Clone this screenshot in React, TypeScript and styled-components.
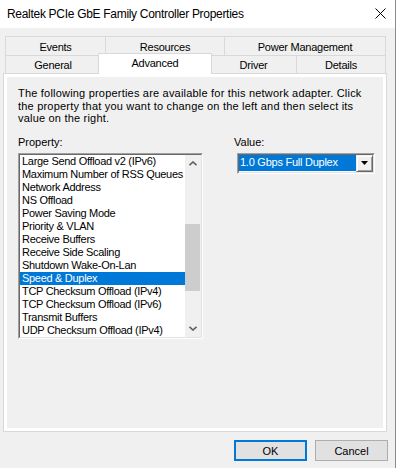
import React from 'react';
import styled, {createGlobalStyle} from 'styled-components';

const GlobalStyle = createGlobalStyle`
  html, body {
    margin: 0;
    padding: 0;
    background: #f0f0f0;
  }
  body {
    font-family: "Liberation Sans", Arial, sans-serif;
    font-size: 11px;
    color: #000;
  }
`

const Window = styled.div`
  width: 396px;
  height: 468px;
  box-sizing: border-box;
  border-right: 1px solid #8c8c8c;
  display: flex;
  flex-direction: column;
  background: #f0f0f0;
`

const TitleBar = styled.div`
  height: 27px;
  flex-shrink: 0;
  background: #fff;
  display: flex;
  align-items: center;
  justify-content: space-between;
  padding: 0 9px 1px 7px;
  font-size: 12px;
  letter-spacing: -0.3px;
`

const Body = styled.div`
  padding: 8px 8px 0 3px;
  display: flex;
  flex-direction: column;
`

const TabStrip = styled.div`
  padding-left: 2px;
  display: flex;
  flex-direction: column;
`

const TabRow = styled.div<{ $height: number }>`
  display: flex;
  align-items: flex-start;
  height: ${p => p.$height}px;
`

const Tab = styled.div<{ $width: number; $height: number; $selected?: boolean }>`
  box-sizing: border-box;
  width: ${p => p.$width}px;
  height: ${p => p.$height}px;
  border: 1px solid #d9d9d9;
  border-bottom: none;
  background: ${p => p.$selected ? '#fff' : '#f0f0f0'};
  display: flex;
  align-items: center;
  justify-content: center;
  padding-top: 1px;
  margin-left: -1px;
  letter-spacing: -0.25px;

  &:first-child {
    margin-left: 0;
  }

  ${p => p.$selected && `
    position: relative;
    z-index: 1;
    margin: -2px -1px -1px -3px;
    padding-top: 0;
    padding-bottom: 2px;
  `}
`

const Panel = styled.div`
  box-sizing: border-box;
  height: 359px;
  border: 1px solid #d9d9d9;
  box-shadow: inset 0 0 0 3px #fff;
  padding: 13px 0 0 14px;
  display: flex;
  flex-direction: column;
`

const Description = styled.p`
  margin: 0;
  line-height: 12.5px;
  letter-spacing: 0.2px;
`

const Fields = styled.div`
  display: flex;
  margin-top: 11px;
`

const Column = styled.div<{ $indent?: number }>`
  display: flex;
  flex-direction: column;
  margin-left: ${p => p.$indent || 0}px;
`

const Label = styled.div`
  line-height: 13px;
  margin-bottom: 4px;
`

const ListBox = styled.div`
  box-sizing: border-box;
  width: 185px;
  height: 186px;
  border: 1px solid;
  border-color: #a0a0a0 #fff #fff #a0a0a0;
  display: flex;
`

const ListFrame = styled.div`
  flex: 1;
  display: flex;
  border: 1px solid;
  border-color: #696969 #e3e3e3 #e3e3e3 #696969;
  background: #fff;
`

const Items = styled.div`
  flex: 1;
  display: flex;
  flex-direction: column;
  overflow: hidden;
`

const Item = styled.div<{ $selected?: boolean }>`
  height: 13px;
  line-height: 13px;
  padding-left: 2px;
  white-space: nowrap;
  letter-spacing: -0.3px;
  background: ${p => p.$selected ? '#0078d7' : 'transparent'};
  color: ${p => p.$selected ? '#fff' : '#000'};
`

const ScrollBar = styled.div`
  width: 16px;
  flex-shrink: 0;
  background: #f0f0f0;
  display: flex;
  flex-direction: column;
`

const ScrollArrow = styled.div`
  height: 17px;
  display: flex;
  align-items: center;
  justify-content: center;
`

const Track = styled.div`
  flex: 1;
`

const Thumb = styled.div`
  width: 15px;
  background: #cdcdcd;
`

const Combo = styled.div`
  box-sizing: border-box;
  margin-left: 3px;
  width: 138px;
  height: 21px;
  border: 1px solid;
  border-color: #a0a0a0 #fff #fff #a0a0a0;
  display: flex;
`

const ComboFrame = styled.div`
  flex: 1;
  display: flex;
  border: 1px solid;
  border-color: #696969 #e3e3e3 #e3e3e3 #696969;
  background: #fff;
`

const ComboValue = styled.div`
  flex: 1;
  margin-bottom: 1px;
  background: #0078d7;
  color: #fff;
  line-height: 15px;
  padding-left: 1px;
  white-space: nowrap;
  letter-spacing: -0.25px;
`

const DropButton = styled.div`
  box-sizing: border-box;
  width: 17px;
  background: #f0f0f0;
  border: 1px solid;
  border-color: #f0f0f0 #696969 #696969 #f0f0f0;
  box-shadow: inset 1px 1px 0 #fff, inset -1px -1px 0 #a0a0a0;
  display: flex;
  align-items: center;
  justify-content: center;
`

const ButtonRow = styled.div`
  display: flex;
  justify-content: flex-end;
  gap: 8px;
  margin-top: 8px;
  margin-right: -1px;
`

const Button = styled.button<{ $default?: boolean }>`
  box-sizing: border-box;
  width: 73px;
  height: 21px;
  padding: 0;
  font: inherit;
  font-size: 11px;
  color: #000;
  background: #e1e1e1;
  border: ${p => p.$default ? '2px solid #0078d7' : '1px solid #adadad'};
`

const properties = [
    'Large Send Offload v2 (IPv6)',
    'Maximum Number of RSS Queues',
    'Network Address',
    'NS Offload',
    'Power Saving Mode',
    'Priority & VLAN',
    'Receive Buffers',
    'Receive Side Scaling',
    'Shutdown Wake-On-Lan',
    'Speed & Duplex',
    'TCP Checksum Offload (IPv4)',
    'TCP Checksum Offload (IPv6)',
    'Transmit Buffers',
    'UDP Checksum Offload (IPv4)',
]

const Chevron = ({down}: { down?: boolean }) => (
    <svg width="8" height="5" viewBox="0 0 8 5">
        <polyline
            points={down ? '0.5,0.8 4,4 7.5,0.8' : '0.5,4.2 4,1 7.5,4.2'}
            fill="none"
            stroke="#606060"
            strokeWidth="1.6"/>
    </svg>
)

const App = () => {
    const selected = 'Speed & Duplex'
    const thumbTop = 52

    return (
        <>
            <GlobalStyle/>
            <Window>
                <TitleBar>
                    <span>Realtek PCIe GbE Family Controller Properties</span>
                    <svg width="11" height="11" viewBox="0 0 11 11">
                        <path d="M0.5 0.5 L10.5 10.5 M10.5 0.5 L0.5 10.5" stroke="#000" strokeWidth="1"/>
                    </svg>
                </TitleBar>
                <Body>
                    <TabStrip>
                        <TabRow $height={19}>
                            <Tab $width={101} $height={19}>Events</Tab>
                            <Tab $width={120} $height={19}>Resources</Tab>
                            <Tab $width={162} $height={19}>Power Management</Tab>
                        </TabRow>
                        <TabRow $height={18}>
                            <Tab $width={96} $height={18}>General</Tab>
                            <Tab $width={114} $height={21} $selected>Advanced</Tab>
                            <Tab $width={87} $height={18}>Driver</Tab>
                            <Tab $width={90} $height={18}>Details</Tab>
                        </TabRow>
                    </TabStrip>
                    <Panel>
                        <Description>
                            The following properties are available for this network adapter. Click<br/>
                            the property that you want to change on the left and then select its<br/>
                            value on the right.
                        </Description>
                        <Fields>
                            <Column>
                                <Label>Property:</Label>
                                <ListBox>
                                    <ListFrame>
                                        <Items>
                                            {properties.map(name => (
                                                <Item key={name} $selected={name === selected}>{name}</Item>
                                            ))}
                                        </Items>
                                        <ScrollBar>
                                            <ScrollArrow><Chevron/></ScrollArrow>
                                            <Track>
                                                <Thumb style={{marginTop: thumbTop, height: 67}}/>
                                            </Track>
                                            <ScrollArrow><Chevron down/></ScrollArrow>
                                        </ScrollBar>
                                    </ListFrame>
                                </ListBox>
                            </Column>
                            <Column $indent={31}>
                                <Label>Value:</Label>
                                <Combo>
                                    <ComboFrame>
                                        <ComboValue>1.0 Gbps Full Duplex</ComboValue>
                                        <DropButton>
                                            <svg width="7" height="4" viewBox="0 0 7 4">
                                                <path d="M0 0 H7 L3.5 4 Z" fill="#000"/>
                                            </svg>
                                        </DropButton>
                                    </ComboFrame>
                                </Combo>
                            </Column>
                        </Fields>
                    </Panel>
                    <ButtonRow>
                        <Button $default>OK</Button>
                        <Button>Cancel</Button>
                    </ButtonRow>
                </Body>
            </Window>
        </>
    )
}

export default App;
